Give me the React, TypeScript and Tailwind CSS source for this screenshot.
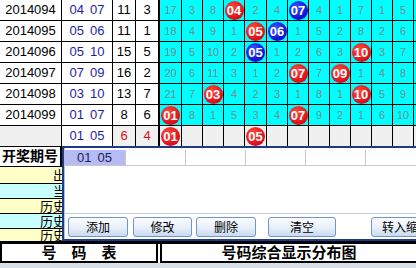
import React from "react";

const rows = [
  { date: "2014094", a: "04", b: "07", sum: "11", span: "3", cells: ["17", "3", "8", "r04", "2", "4", "b07", "4", "1", "7", "1", "5"] },
  { date: "2014095", a: "05", b: "06", sum: "11", span: "1", cells: ["18", "4", "9", "1", "r05", "b06", "1", "5", "2", "8", "2", "6"] },
  { date: "2014096", a: "05", b: "10", sum: "15", span: "5", cells: ["19", "5", "10", "2", "b05", "1", "2", "6", "3", "r10", "3", "7"] },
  { date: "2014097", a: "07", b: "09", sum: "16", span: "2", cells: ["20", "6", "11", "3", "1", "2", "r07", "7", "r09", "1", "4", "8"] },
  { date: "2014098", a: "03", b: "10", sum: "13", span: "7", cells: ["21", "7", "r03", "4", "2", "3", "1", "8", "1", "r10", "5", "9"] },
  { date: "2014099", a: "01", b: "07", sum: "8", span: "6", cells: ["r01", "8", "1", "5", "3", "4", "r07", "9", "2", "1", "6", "10"] },
];

const lastCells = ["r01", "", "", "", "r05", "", "", "", "", "", "", ""];

// column widths of the distribution grid (border included)
const colW = ["w-[22px]", "w-[21px]", "w-[21px]", "w-[21px]", "w-[22px]", "w-[21px]", "w-[21px]", "w-[21px]", "w-[21px]", "w-[21px]", "w-[21px]", "w-[21px]"];

const statRows = [
  { label: "出现次数", bg: "bg-[#ffffc8]", h: "h-[17px]" },
  { label: "当前遗漏", bg: "bg-[#c8ffff]", h: "h-[15px]" },
  { label: "历史最大遗漏", bg: "bg-[#ffffc8]", h: "h-[15px]" },
  { label: "历史平均遗漏", bg: "bg-[#c8ffff]", h: "h-[15px]" },
  { label: "历史最小遗漏", bg: "bg-[#ffffc8]", h: "h-[13px]" },
];

const Ball = ({ n, blue }: { n: string; blue: boolean }) => (
  <span
    className={`flex h-[19px] w-[19px] items-center justify-center rounded-full text-[13px] font-bold leading-none text-white ${
      blue
        ? "bg-[radial-gradient(circle_at_38%_32%,#3b55ff,#0a14d8_65%,#0008a8)]"
        : "bg-[radial-gradient(circle_at_38%_32%,#ff4a3a,#e0101a_65%,#b00008)]"
    }`}
  >
    {n}
  </span>
);

const GridCell = ({ v, w, gray }: { v: string; w: string; gray?: boolean }) => (
  <div className={`${w} flex shrink-0 items-center justify-center border-r border-black ${gray ? "bg-[#f0f0f0]" : "bg-[#00ffff]"}`}>
    {v.startsWith("r") ? (
      <Ball n={v.slice(1)} blue={false} />
    ) : v.startsWith("b") ? (
      <Ball n={v.slice(1)} blue />
    ) : (
      <span className="text-[11px] text-[#7a8a8a]">{v}</span>
    )}
  </div>
);

const Btn = ({ label, className }: { label: string; className: string }) => (
  <button
    className={`${className} flex h-[20px] shrink-0 items-center justify-center rounded-[3px] border border-[#7394c6] bg-gradient-to-b from-[#fbfdff] via-[#eaf1fb] to-[#c9daf1] text-[12px] text-black`}
  >
    {label}
  </button>
);

export default function App() {
  return (
    <div className="relative h-[268px] w-[416px] overflow-hidden bg-white font-['Liberation_Sans','Noto_Sans_CJK_SC',sans-serif] text-black">
      {/* draw history */}
      {rows.map((r) => (
        <div key={r.date} className="flex h-[21px] border-b border-black">
          <div className="flex w-[62px] shrink-0 items-center justify-center border-r border-black text-[13px]">{r.date}</div>
          <div className="flex w-[51px] shrink-0 items-center justify-center gap-[6px] border-r border-black text-[13px] text-[#1e1ea0]">
            <span>{r.a}</span>
            <span>{r.b}</span>
          </div>
          <div className="flex w-[23px] shrink-0 items-center justify-center border-r border-black text-[13px]">{r.sum}</div>
          <div className="flex w-[24px] shrink-0 items-center justify-center border-r-2 border-black text-[13px]">{r.span}</div>
          {r.cells.map((c, i) => (
            <GridCell key={i} v={c} w={colW[i]} />
          ))}
          <div className="w-[30px] shrink-0 bg-[#00ffff]" />
        </div>
      ))}
      <div className="flex h-[21px] border-b border-black">
        <div className="w-[62px] shrink-0 border-r border-black bg-[#f0f0f0]" />
        <div className="flex w-[51px] shrink-0 items-center justify-center gap-[6px] border-r border-black text-[13px] text-[#1e1ea0]">
          <span>01</span>
          <span>05</span>
        </div>
        <div className="flex w-[23px] shrink-0 items-center justify-center border-r border-black bg-[#f0f0f0] text-[13px] text-[#e01010]">6</div>
        <div className="flex w-[24px] shrink-0 items-center justify-center border-r-2 border-black bg-[#f0f0f0] text-[13px] text-[#e01010]">4</div>
        {lastCells.map((c, i) => (
          <GridCell key={i} v={c} w={colW[i]} gray />
        ))}
        <div className="w-[30px] shrink-0 bg-[#f0f0f0]" />
      </div>

      {/* statistics */}
      <div className="flex h-[20px] border-b border-black">
        <div className="flex w-[62px] shrink-0 items-center justify-center border-r-2 border-black text-[14px] font-bold">开奖期号</div>
      </div>
      {statRows.map((s) => (
        <div key={s.label} className={`flex ${s.h} border-b border-black ${s.bg}`}>
          <div className="flex w-[160px] shrink-0 items-center justify-center overflow-hidden border-r-2 border-black text-[13px] leading-none">
            {s.label}
          </div>
          {colW.map((w, i) => (
            <div key={i} className={`${w} shrink-0 border-r border-black`} />
          ))}
        </div>
      ))}

      {/* footer */}
      <div className="flex h-[21px] gap-[2px] border-t-2 border-black">
        <div className="flex w-[158px] shrink-0 items-center justify-center border-x-2 border-b-2 border-black text-[15px] font-bold leading-none">
          号　码　表
        </div>
        <div className="flex flex-1 items-center justify-center border-l-2 border-b-2 border-black text-[15px] font-bold leading-none">
          号码综合显示分布图
        </div>
      </div>
      <div className="h-[6px] bg-[#d9dfe7]" />

      {/* input window over the table */}
      <div className="absolute left-[62px] top-[146px] flex h-[95px] w-[354px] flex-col border-y-2 border-l-2 border-[#1d3b8a] bg-white shadow-[inset_1px_0_0_#a9c3e6]">
        <div className="mt-[2px] flex h-[16px] border-b border-[#c9c9c9] text-[13px]">
          <div className="flex w-[62px] shrink-0 items-center justify-center gap-[6px] border-r border-[#c9c9c9] bg-[#b6bbf3] text-[#20205a]">
            <span>01</span>
            <span>05</span>
          </div>
          <div className="w-[60px] shrink-0 border-r border-[#c9c9c9]" />
          <div className="w-[60px] shrink-0 border-r border-[#c9c9c9]" />
          <div className="w-[60px] shrink-0 border-r border-[#c9c9c9]" />
          <div className="w-[60px] shrink-0 border-r border-[#c9c9c9]" />
        </div>
        <div className="flex-1" />
        <div className="flex h-[26px] items-start border-t border-[#c4cdd9] pl-[4px] pt-[3px] font-['Noto_Sans_CJK_SC',sans-serif]">
          <Btn label="添加" className="w-[60px]" />
          <Btn label="修改" className="ml-[5px] w-[59px]" />
          <Btn label="删除" className="ml-[4px] w-[60px]" />
          <Btn label="清空" className="ml-[12px] w-[68px]" />
          <Btn label="转入缩水" className="ml-[35px] w-[70px]" />
        </div>
      </div>
    </div>
  );
}
